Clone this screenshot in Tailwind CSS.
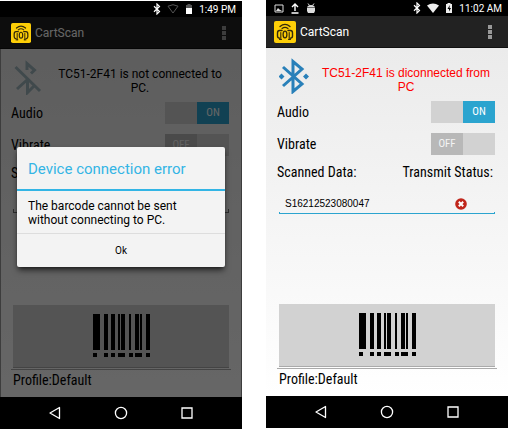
<!DOCTYPE html>
<html lang="en">
<head>
<meta charset="utf-8">
<meta name="viewport" content="width=device-width, initial-scale=1">
<title>CartScan</title>
<script src="https://cdn.jsdelivr.net/npm/@tailwindcss/browser@4"></script>
</head>
<body class="bg-white font-['Roboto','Liberation_Sans',sans-serif] text-black">
<svg class="hidden" aria-hidden="true">
  <symbol id="bt" viewBox="0 0 8 12"><path d="M1 3.2 6.5 8.6 4 11V1l2.500 2.400L1 8.800" fill="none" stroke="currentColor" stroke-width="1.200"/></symbol>
  <symbol id="logo" viewBox="0 0 22 22">
    <rect width="22" height="22" rx="2" fill="#fdce07"/>
    <g fill="none" stroke="#33290a" stroke-linecap="round">
      <path d="M6 5.500Q11 1.200 16 5.500" stroke-width="1.300"/>
      <path d="M8 7.500Q11 5.200 14 7.500" stroke-width="1.200"/>
      <path d="M8 9.500H5.500Q3.500 9.500 3.500 12v3q0 2 2 2.200M14 9.500h2.500q2 0 2 2.500v3q0 2-2 2.200" stroke-width="1.400"/>
      <path d="M6.800 11.500v7M15.200 11.500v7M5.500 18.500h2M14.500 18.500h2" stroke-width="1.100"/>
      <ellipse cx="11" cy="13.500" rx="1.900" ry="3.300" stroke-width="1.300"/>
    </g>
  </symbol>
  <symbol id="barcode" viewBox="0 0 57 44">
    <path d="M0 0h7v36H0zM11 0h4v36h-4zM18 0h4v36h-4zM25 0h2v36h-2zM28 0h4v36h-4zM36 0h2v36h-2zM42 0h4v36h-4zM47 0h2v36h-2zM53 0h4v36h-4zM0 39h4v4H0zM11 39h4v4h-4zM18 39h4v4h-4zM25 39h7v4h-7zM36 39h4v4h-4zM42 39h7v4h-7zM53 39h4v4h-4z" fill="#000"/>
  </symbol>
  <symbol id="back" viewBox="0 0 14 14"><path d="M11.500 1.500v11L2 7z" fill="none" stroke="currentColor" stroke-width="1.300" stroke-linejoin="round"/></symbol>
  <symbol id="home" viewBox="0 0 14 14"><circle cx="7" cy="7" r="5.600" fill="none" stroke="currentColor" stroke-width="1.300"/></symbol>
  <symbol id="recent" viewBox="0 0 14 14"><path d="M2 2h10v10H2z" fill="none" stroke="currentColor" stroke-width="1.300"/></symbol>
  <symbol id="more" viewBox="0 0 4 14"><path d="M0 0h4v4H0zM0 5h4v4H0zM0 10h4v4H0z" fill="currentColor"/></symbol>
</svg>

<div class="flex gap-6">

  <!-- Scanner that lost its connection, with the error dialog open -->
  <section class="relative mt-px flex flex-1 flex-col">
    <div class="flex h-4 items-center justify-end gap-1 bg-black pr-1.5 text-[10px] text-white">
      <svg class="h-3 w-2"><use href="#bt"/></svg>
      <svg class="ml-0.5 h-3 w-3" viewBox="0 0 12 12"><path d="M1 3.200Q6 .2 11 3.200L6 10z" fill="none" stroke="#555"/></svg>
      <svg class="mx-0.5 h-3 w-2" viewBox="0 0 8 12"><path d="M1 2h1.500V1h3v1H7v3H1z" fill="#555"/><path d="M1 5h6v6H1z" fill="#fff"/></svg>
      <span>1:49 PM</span>
    </div>
    <div class="relative">
      <header class="flex h-8 items-center gap-1 border-b border-[#111] bg-[#222] pr-4 pl-[11px] text-white">
        <svg class="relative z-20 h-5 w-5"><use href="#logo"/></svg>
        <h1 class="flex-1 text-xs">CartScan</h1>
        <button aria-label="More options" class="text-[#999]"><svg class="h-3.5 w-1"><use href="#more"/></svg></button>
      </header>
      <div class="border-x border-[#999] bg-linear-to-b from-[#ebebeb] to-white px-2.5">
        <div class="flex h-12 items-end gap-1 pb-0.5">
          <svg class="ml-0.5 h-9 w-8 shrink-0" viewBox="0 0 32 36"><path d="M2.500 8 27 32M14 11V4.500l7.500 6.500-3.500 3.500M4 30l10.500-9.500M14.500 20v13.500l6-6" fill="none" stroke="#a0b7be" stroke-width="3"/></svg>
          <p class="flex-1 text-center text-xs leading-3.5">TC51-2F41 is not connected to PC.</p>
        </div>
        <label class="relative flex h-8 items-center justify-between pr-0.5 font-['Roboto_Condensed','Roboto',sans-serif] text-sm">Audio
          <input type="checkbox" checked class="sr-only">
          <span class="grid h-5.5 w-16 grid-cols-2 bg-[#d2d2d2] text-center text-[11px] leading-5.5 text-white"><span class="col-start-2 bg-[#2ba4cf]">ON</span></span>
        </label>
        <label class="relative flex h-8 items-center justify-between pr-0.5 font-['Roboto_Condensed','Roboto',sans-serif] text-sm">Vibrate
          <input type="checkbox" class="sr-only">
          <span class="grid h-5.5 w-16 grid-cols-2 bg-[#d2d2d2] text-center text-[11px] leading-5.5 text-[#f4f4f4]"><span class="bg-[#b8b8b8]">OFF</span></span>
        </label>
        <div class="flex h-6 items-center justify-between pr-1 font-['Roboto_Condensed','Roboto',sans-serif] text-sm"><label for="scan-a">S</label></div>
        <div class="mx-0.5 mt-2 flex flex-col">
          <input id="scan-a" class="h-4 w-full px-1.5 text-[10px] outline-none">
          <div class="h-1 border-x border-b border-[#777]"></div>
        </div>
        <button aria-label="Scan barcode" class="mx-0.5 mt-[92px] flex h-[63px] w-[calc(100%-4px)] items-center justify-center border-b border-[#aaa] bg-[#d2d2d2]"><svg class="h-11 w-[57px]"><use href="#barcode"/></svg></button>
        <p class="mt-px h-7 border-t border-[#aaa] px-0.5 font-['Roboto_Condensed','Roboto',sans-serif] text-sm leading-5">Profile:Default</p>
      </div>
      <div class="absolute inset-0 z-10 bg-black/60"></div>
    </div>
    <nav class="flex h-8 items-center justify-center gap-[52px] bg-black text-white">
      <button aria-label="Back"><svg class="h-3.5 w-3.5"><use href="#back"/></svg></button>
      <button aria-label="Home"><svg class="h-3.5 w-3.5"><use href="#home"/></svg></button>
      <button aria-label="Recent apps"><svg class="h-3.5 w-3.5"><use href="#recent"/></svg></button>
    </nav>
    <div role="dialog" aria-labelledby="error-title" class="absolute inset-x-[17px] top-[146px] z-30 rounded-xs bg-[#f3f3f3] shadow-md shadow-black/60">
      <h2 id="error-title" class="border-b-2 border-[#33b5e5] px-[11px] pt-3 pb-2.5 text-[15px] leading-5 text-[#33b5e5]">Device connection error</h2>
      <p class="px-[11px] pt-2 pb-1.5 text-xs leading-3.5">The barcode cannot be sent<br>without connecting to PC.</p>
      <button class="block h-8.5 w-full border-t border-[#ddd] text-[10px]">Ok</button>
    </div>
  </section>

  <!-- Scanner with a code that could not be transmitted -->
  <section class="flex flex-1 flex-col">
    <div class="flex h-4 items-center justify-between bg-black pr-1.5 pl-2 text-[10px] text-white">
      <div class="flex items-center gap-1.5">
        <svg class="h-2.5 w-2.5" viewBox="0 0 10 10"><path d="M1 2h8v7H1z" fill="none" stroke="#ddd"/><path d="M2 8l2-3 1.500 1.500L8 8z" fill="#ddd"/></svg>
        <svg class="h-3 w-2.5" viewBox="0 0 10 12"><path d="M5 9V2M2 5l3-3 3 3M1.500 11h7" fill="none" stroke="#fff" stroke-width="1.400"/></svg>
        <svg class="h-3 w-2.5" viewBox="0 0 10 12"><path d="M1 6h8v3l-1 2H2L1 9zM1 5.500Q1.500 3 5 3t4 2.500z" fill="#ddd"/><path d="m2 1.500 1.500 2M8 1.500l-1.500 2" stroke="#ddd"/></svg>
      </div>
      <div class="flex items-center gap-1.5">
        <svg class="h-3 w-2"><use href="#bt"/></svg>
        <svg class="h-3 w-3" viewBox="0 0 12 12"><path d="M0 3.500Q6-.5 12 3.500L6 11z" fill="#eee"/></svg>
        <svg class="h-3 w-2" viewBox="0 0 8 12"><path d="M1 2h1.500V1h3v1H7v9H1z" fill="#eee"/><path d="M4.800 3 2.500 7H4v2.500L6 6H4.500z" fill="#000"/></svg>
        <span>11:02 AM</span>
      </div>
    </div>
    <header class="flex h-8 items-center gap-1 border-b border-[#111] bg-[#222] pr-4 pl-2 text-white">
      <svg class="h-[22px] w-[22px]"><use href="#logo"/></svg>
      <h1 class="flex-1 text-xs">CartScan</h1>
      <button aria-label="More options" class="text-[#999]"><svg class="h-3.5 w-1"><use href="#more"/></svg></button>
    </header>
    <div class="bg-linear-to-b from-[#ebebeb] to-white px-[11px]">
      <div class="flex h-12 items-end gap-1 pb-0.5">
        <svg class="ml-0.5 h-9 w-8 shrink-0" viewBox="0 0 32 36"><path d="m4 9 19 17-9 7.500V3.500L23 11 4 28" fill="none" stroke="#2980b9" stroke-width="3"/><path d="m2.500 15.500 3 3-3 3-3-3zM27 15.500l3 3-3 3-3-3z" fill="#2980b9"/></svg>
        <p class="flex-1 text-center font-['Liberation_Sans',sans-serif] text-xs leading-3.5 text-[#f00]">TC51-2F41 is diconnected from PC</p>
      </div>
      <label class="relative flex h-8 items-center justify-between pr-0.5 font-['Roboto_Condensed','Roboto',sans-serif] text-sm">Audio
        <input type="checkbox" checked class="sr-only">
        <span class="grid h-5.5 w-16 grid-cols-2 bg-[#d2d2d2] text-center text-[11px] leading-5.5 text-white"><span class="col-start-2 bg-[#2ba4cf]">ON</span></span>
      </label>
      <label class="relative flex h-8 items-center justify-between pr-0.5 font-['Roboto_Condensed','Roboto',sans-serif] text-sm">Vibrate
        <input type="checkbox" class="sr-only">
        <span class="grid h-5.5 w-16 grid-cols-2 bg-[#d2d2d2] text-center text-[11px] leading-5.5 text-[#f4f4f4]"><span class="bg-[#b8b8b8]">OFF</span></span>
      </label>
      <div class="flex h-6 items-center justify-between pr-1 font-['Roboto_Condensed','Roboto',sans-serif] text-sm"><label for="scan-b">Scanned Data:</label><span>Transmit Status:</span></div>
      <div class="mx-0.5 mt-2 flex flex-col">
        <div class="mt-1 flex h-4 items-center pr-7 pl-1.5">
          <input id="scan-b" value="S16212523080047" class="w-0 flex-1 font-['Liberation_Sans',sans-serif] text-[10px] leading-4 outline-none">
          <svg class="h-3 w-3" viewBox="0 0 12 12" role="img" aria-label="Not sent"><circle cx="6" cy="6" r="5.800" fill="#c0261b"/><path d="m3.800 3.800 4.400 4.400m0-4.400L3.800 8.200" stroke="#fff" stroke-width="2"/></svg>
        </div>
        <div class="h-0.5 border-x border-b border-[#2ba4cf]"></div>
      </div>
      <button aria-label="Scan barcode" class="mx-0.5 mt-[90px] flex h-[63px] w-[calc(100%-4px)] items-center justify-center border-b border-[#aaa] bg-[#d2d2d2]"><svg class="h-11 w-[57px]"><use href="#barcode"/></svg></button>
      <p class="mt-px h-7 border-t border-[#aaa] px-0.5 font-['Roboto_Condensed','Roboto',sans-serif] text-sm leading-5">Profile:Default</p>
    </div>
    <nav class="flex h-8 items-center justify-center gap-[52px] bg-black text-white">
      <button aria-label="Back"><svg class="h-3.5 w-3.5"><use href="#back"/></svg></button>
      <button aria-label="Home"><svg class="h-3.5 w-3.5"><use href="#home"/></svg></button>
      <button aria-label="Recent apps"><svg class="h-3.5 w-3.5"><use href="#recent"/></svg></button>
    </nav>
  </section>
</div>
</body>
</html>
